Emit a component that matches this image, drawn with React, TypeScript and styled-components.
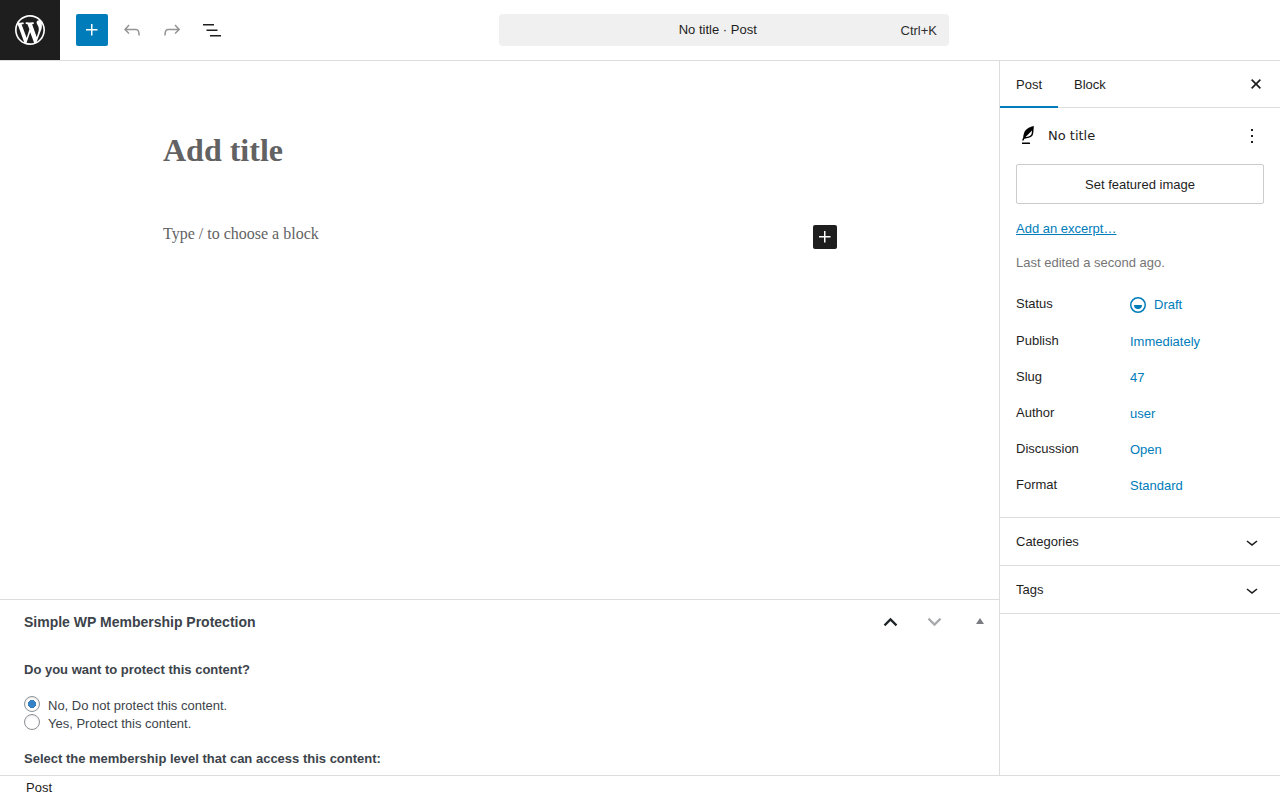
import React, { useState } from "react";
import styled, { createGlobalStyle } from "styled-components";

const accent = "#007cba";
const ink = "#1e1e1e";
const line = "#dddddd";
const metaInk = "#3c434a";

const GlobalStyle = createGlobalStyle`
  *, *::before, *::after { box-sizing: border-box; }
  body {
    margin: 0;
    background: #fff;
    color: ${ink};
    font: 13px/18px "Liberation Sans", Arial, sans-serif;
  }
  h1, h2, p, dl, dd, dt, fieldset { margin: 0; padding: 0; border: 0; }
  button, input { font: inherit; color: inherit; }
`;

const Editor = styled.div`
  display: grid;
  grid-template-rows: auto minmax(0, 1fr) auto;
  height: 100vh;
`;

const Header = styled.header`
  display: grid;
  grid-template-columns: 60px max-content minmax(0, 1fr) 60px;
  align-items: center;
  border-bottom: 1px solid ${line};
`;

const HomeLink = styled.a`
  display: flex;
  align-items: center;
  justify-content: center;
  height: 60px;
  background: ${ink};
  color: #fff;
`;

const Toolbar = styled.div`
  display: flex;
  gap: 8px;
  padding-left: 16px;
`;

const IconButton = styled.button<{ $size?: number; $fill?: string; $color?: string }>`
  display: inline-flex;
  align-items: center;
  justify-content: center;
  flex: none;
  width: ${(p) => p.$size ?? 32}px;
  height: ${(p) => p.$size ?? 32}px;
  padding: 0;
  border: 0;
  border-radius: 2px;
  background: ${(p) => p.$fill ?? "transparent"};
  color: ${(p) => p.$color ?? ink};
`;

const CommandBar = styled.button`
  display: flex;
  align-items: center;
  justify-self: center;
  width: 100%;
  max-width: 450px;
  height: 32px;
  padding: 0 12px 0 36px;
  border: 0;
  border-radius: 4px;
  background: #f0f0f0;
`;

const CommandTitle = styled.span`
  flex: 1;
  text-align: center;
`;

const Shortcut = styled.span`
  padding-top: 2px;
  color: #2f2f2f;
`;

const Body = styled.div`
  display: grid;
  grid-template-columns: minmax(0, 1fr) 281px;
  min-height: 0;
`;

const Content = styled.main`
  display: flex;
  flex-direction: column;
  min-height: 0;
`;

const Canvas = styled.section`
  flex: 1;
  min-height: 0;
  overflow: hidden;
  padding: 65px 16px 0;
`;

const Column = styled.div`
  display: flex;
  flex-direction: column;
  gap: 48px;
  max-width: 675px;
  margin: 0 auto;
  padding-left: 1px;
  font-family: "Liberation Serif", "Times New Roman", serif;
`;

const CanvasInput = styled.input<{ $heading?: boolean }>`
  flex: 1;
  min-width: 0;
  width: 100%;
  padding: 0;
  border: 0;
  outline: 0;
  background: transparent;
  font-size: ${(p) => (p.$heading ? 32 : 16)}px;
  font-weight: ${(p) => (p.$heading ? 700 : 400)};
  line-height: ${(p) => (p.$heading ? 48 : 24)}px;
  height: ${(p) => (p.$heading ? 48 : 24)}px;
  &::placeholder { color: #626262; opacity: 1; }
`;

const BlockRow = styled.div`
  display: flex;
  align-items: flex-end;
  height: 27px;
  > input { align-self: flex-start; }
`;

const MetaBox = styled.section`
  border-top: 1px solid ${line};
  color: ${metaInk};
`;

const MetaHeader = styled.header`
  display: flex;
  align-items: center;
  height: 44px;
  padding-left: 24px;
`;

const MetaTitle = styled.h2`
  flex: 1;
  font-size: 14px;
  line-height: 18px;
`;

const MetaActions = styled.div`
  display: flex;
  align-items: center;
  > :last-child { width: 42px; padding-left: 4px; }
`;

const MetaBody = styled.div`
  display: flex;
  flex-direction: column;
  padding: 17px 24px 7px;
`;

const Strong = styled.p`
  font-weight: 700;
`;

const Choices = styled.fieldset`
  margin: 17px 0 18px;
`;

const Choice = styled.label`
  display: flex;
  align-items: flex-start;
  gap: 8px;
  height: 18px;
  line-height: 20px;
`;

const Radio = styled.input`
  appearance: none;
  width: 16px;
  height: 16px;
  margin: 0;
  border: 1px solid #8c8f94;
  border-radius: 50%;
  background: #fff;
  box-shadow: inset 0 1px 2px rgba(0, 0, 0, 0.1);
  &:checked { background: radial-gradient(circle, #3582c4 0 4px, #fff 4px); }
`;

const Sidebar = styled.aside`
  border-left: 1px solid ${line};
  overflow: hidden;
`;

const Tabs = styled.div`
  display: flex;
  align-items: stretch;
  height: 47px;
  border-bottom: 1px solid ${line};
`;

const Tab = styled.button<{ $active?: boolean }>`
  height: 47px;
  padding: 0 16px;
  border: 0;
  background: none;
  box-shadow: ${(p) => (p.$active ? `inset 0 -2px 0 ${accent}` : "none")};
`;

const TabsEnd = styled.div`
  display: flex;
  align-items: center;
  margin-left: auto;
  padding-right: 12px;
  svg { stroke: currentColor; stroke-width: 0.4; }
`;

const Summary = styled.div`
  display: flex;
  flex-direction: column;
  gap: 16px;
  padding: 16px 16px 15px;
`;

const Card = styled.div`
  display: flex;
  align-items: center;
  gap: 8px;
  height: 24px;
  color: #000;
`;

const CardTitle = styled.h2`
  flex: 1;
  color: ${ink};
  font: 400 13px/20px "DejaVu Sans", sans-serif;
`;

const FeaturedButton = styled.button`
  height: 40px;
  padding: 2px 12px 0;
  border: 1px solid #cccccc;
  border-radius: 2px;
  background: #fff;
`;

const ExcerptLink = styled.a`
  align-self: flex-start;
  color: ${accent};
  text-decoration: underline;
`;

const Muted = styled.p`
  color: #757575;
`;

const Rows = styled.dl`
  display: flex;
  flex-direction: column;
  gap: 4px;
`;

const Row = styled.div`
  display: grid;
  grid-template-columns: 106px 1fr;
  gap: 8px;
  align-items: center;
  min-height: 32px;
  dt { padding-bottom: 2px; }
  &:first-child { min-height: 34px; }
`;

const RowButton = styled.button`
  display: inline-flex;
  align-items: center;
  gap: 4px;
  height: 32px;
  padding: 0;
  border: 0;
  background: none;
  color: ${accent};
  vertical-align: top;
  svg { margin-left: -4px; }
`;

const Panel = styled.button`
  display: flex;
  align-items: center;
  justify-content: space-between;
  width: 100%;
  height: 48px;
  padding: 0 16px;
  border: 0;
  border-top: 1px solid ${line};
  background: none;
  svg { flex: none; }
  &:last-child { height: 49px; border-bottom: 1px solid ${line}; }
`;

const Footer = styled.footer`
  display: flex;
  align-items: center;
  height: 25px;
  padding: 0 26px;
  border-top: 1px solid ${line};
`;

const paths = {
  plus: "M11 12.5V17.5H12.5V12.5H17.5V11H12.5V6H11V11H6V12.5H11Z",
  undo: "M18.3 11.7c-.6-.6-1.4-.9-2.3-.9H6.7l2.9-3.3-1.1-1-4.5 5L8.5 16l1-1-2.7-2.7H16c.5 0 .9.2 1.3.5 1 1 1 3.4 1 4.5v.3h1.5v-.2c0-1.5 0-4.3-1.5-5.7z",
  redo: "M15.6 6.5l-1.1 1 2.9 3.3H8c-.9 0-1.7.3-2.3.9-1.4 1.5-1.4 4.2-1.4 5.6v.2h1.5v-.3c0-1.1 0-3.5 1-4.5.3-.3.7-.5 1.3-.5h9.2L14.5 15l1.1 1.1 4.6-4.6-4.6-5z",
  list: "M3 6h11v1.5H3V6Zm3.5 5.5h11V13h-11v-1.5ZM21 17H10v1.5h11V17Z",
  close: "M12 13.06l3.712 3.713 1.061-1.06L13.061 12l3.712-3.712-1.06-1.06L12 10.938 8.288 7.227l-1.061 1.06L10.939 12l-3.712 3.712 1.06 1.061L12 13.061z",
  more: "M13 19h-2v-2h2v2zm0-6h-2v-2h2v2zm0-6h-2V5h2v2z",
  chevron: "M17.5 11.6L12 16l-5.5-4.4.9-1.2L12 14l4.5-3.6 1 1.2z",
  draft: "M12 18.5a6.5 6.5 0 1 1 0-13 6.5 6.5 0 0 1 0 13ZM4 12a8 8 0 1 1 16 0 8 8 0 0 1-16 0Zm8 4a4 4 0 0 0 4-4H8a4 4 0 0 0 4 4Z",
  feather: "M17.8 2l-.9.3c-.1 0-3.6 1-5.2 2.1C10 5.5 9.3 6.5 8.9 7.1c-.6.9-1.7 4.7-1.7 6.3l-.9 2.3c-.2.4 0 .8.4 1 .1 0 .2.1.3.1.3 0 .6-.2.7-.5l.6-1.5c.3 0 .7-.1 1.2-.2.7-.1 1.4-.3 2.2-.5.8-.2 1.6-.5 2.4-.8.7-.3 1.4-.7 1.9-1.2s.8-1.2 1-1.9c.2-.7.3-1.6.4-2.4.1-.8.1-1.7.2-2.5 0-.8.1-1.5.2-2.1V2zm-1.9 5.6c-.1.8-.2 1.5-.3 2.1-.2.6-.4 1-.6 1.3-.3.3-.8.6-1.4.9-.7.3-1.4.5-2.2.8-.6.2-1.3.3-1.8.4L15 7.5c.3-.3.6-.7 1-1.1 0 .4 0 .8-.1 1.2zM6 20h8v-1.5H6V20z",
  logo: "M20 10c0-5.51-4.49-10-10-10C4.48 0 0 4.49 0 10c0 5.52 4.48 10 10 10 5.51 0 10-4.48 10-10zM7.78 15.37L4.37 6.22c.55-.02 1.17-.08 1.17-.08.5-.06.44-1.13-.06-1.11 0 0-1.45.11-2.37.11-.18 0-.37 0-.58-.01C4.12 2.69 6.87 1.11 10 1.11c2.33 0 4.45.87 6.05 2.34-.68-.11-1.65.39-1.65 1.58 0 .74.45 1.36.9 2.1.35.61.55 1.36.55 2.46 0 1.49-1.4 5-1.4 5l-3.03-8.37c.54-.02.82-.17.82-.17.5-.05.44-1.25-.06-1.22 0 0-1.44.12-2.38.12-.87 0-2.33-.12-2.33-.12-.5-.03-.56 1.2-.06 1.22l.92.08 1.26 3.41zM17.41 10c.24-.64.74-1.87.43-4.25.7 1.29 1.05 2.71 1.05 4.25 0 3.29-1.73 6.24-4.4 7.78.97-2.59 1.94-5.2 2.92-7.78zM6.1 18.09C3.12 16.65 1.11 13.53 1.11 10c0-1.3.23-2.48.72-3.59C3.25 10.3 4.67 14.2 6.1 18.09zm4.03-6.63l2.58 6.98c-.86.29-1.76.45-2.71.45-.79 0-1.57-.11-2.29-.33.81-2.38 1.62-4.74 2.42-7.1z",
};

function Icon({ name, size = 24, box = "0 0 24 24" }: { name: keyof typeof paths; size?: number; box?: string }) {
  return (
    <svg width={size} height={size} viewBox={box} fill="currentColor" aria-hidden="true">
      <path d={paths[name]} fillRule={name === "draft" ? "evenodd" : "nonzero"} />
    </svg>
  );
}

function Arrow({ points }: { points: string }) {
  return (
    <svg width="20" height="20" viewBox="0 0 20 20" fill="none" stroke="currentColor" strokeWidth="2.2" aria-hidden="true">
      <polyline points={points} />
    </svg>
  );
}

const details = [
  ["Publish", "Immediately"],
  ["Slug", "47"],
  ["Author", "user"],
  ["Discussion", "Open"],
  ["Format", "Standard"],
];

const choices = ["No, Do not protect this content.", "Yes, Protect this content."];

export default function App() {
  const [choice, setChoice] = useState(0);

  return (
    <Editor>
      <GlobalStyle />
      <Header>
        <HomeLink href="#" aria-label="View Posts">
          <Icon name="logo" size={36} box="-2 -2 24 24" />
        </HomeLink>
        <Toolbar role="toolbar" aria-label="Document tools">
          <IconButton $fill={accent} $color="#fff" aria-label="Toggle block inserter"><Icon name="plus" /></IconButton>
          <IconButton $color="#949494" aria-label="Undo"><Icon name="undo" /></IconButton>
          <IconButton $color="#949494" aria-label="Redo"><Icon name="redo" /></IconButton>
          <IconButton aria-label="Document Overview"><Icon name="list" /></IconButton>
        </Toolbar>
        <CommandBar>
          <CommandTitle>No title · Post</CommandTitle>
          <Shortcut>Ctrl+K</Shortcut>
        </CommandBar>
      </Header>

      <Body>
        <Content>
          <Canvas>
            <Column>
              <CanvasInput $heading placeholder="Add title" aria-label="Add title" />
              <BlockRow>
                <CanvasInput placeholder="Type / to choose a block" aria-label="Empty block" />
                <IconButton $size={24} $fill={ink} $color="#fff" aria-label="Add block"><Icon name="plus" /></IconButton>
              </BlockRow>
            </Column>
          </Canvas>

          <MetaBox>
            <MetaHeader>
              <MetaTitle>Simple WP Membership Protection</MetaTitle>
              <MetaActions>
                <IconButton $size={44} $color="#1d2327" aria-label="Move up"><Arrow points="3.5,13.4 9.5,7.4 15.5,13.4" /></IconButton>
                <IconButton $size={44} $color="#a7aaad" aria-label="Move down"><Arrow points="3.5,6.6 9.5,12.6 15.5,6.6" /></IconButton>
                <IconButton $size={44} $color="#787c82" aria-label="Toggle panel">
                  <svg width="8" height="8" viewBox="0 0 8 8" fill="currentColor" aria-hidden="true"><path d="M4 0l4 6H0z" /></svg>
                </IconButton>
              </MetaActions>
            </MetaHeader>
            <MetaBody>
              <Strong>Do you want to protect this content?</Strong>
              <Choices aria-label="Content protection">
                {choices.map((text, i) => (
                  <Choice key={text}>
                    <Radio type="radio" name="protect" checked={choice === i} onChange={() => setChoice(i)} />
                    {text}
                  </Choice>
                ))}
              </Choices>
              <Strong>Select the membership level that can access this content:</Strong>
            </MetaBody>
          </MetaBox>
        </Content>

        <Sidebar>
          <Tabs>
            <Tab $active>Post</Tab>
            <Tab>Block</Tab>
            <TabsEnd>
              <IconButton $size={24} aria-label="Close Settings"><Icon name="close" /></IconButton>
            </TabsEnd>
          </Tabs>
          <Summary>
            <Card>
              <Icon name="feather" />
              <CardTitle>No title</CardTitle>
              <IconButton $size={24} aria-label="Actions"><Icon name="more" /></IconButton>
            </Card>
            <FeaturedButton>Set featured image</FeaturedButton>
            <ExcerptLink href="#">Add an excerpt…</ExcerptLink>
            <Muted>Last edited a second ago.</Muted>
            <Rows>
              <Row>
                <dt>Status</dt>
                <dd><RowButton><Icon name="draft" />Draft</RowButton></dd>
              </Row>
              {details.map(([label, value]) => (
                <Row key={label}>
                  <dt>{label}</dt>
                  <dd><RowButton>{value}</RowButton></dd>
                </Row>
              ))}
            </Rows>
          </Summary>
          <Panel>Categories<Icon name="chevron" /></Panel>
          <Panel>Tags<Icon name="chevron" /></Panel>
        </Sidebar>
      </Body>

      <Footer>Post</Footer>
    </Editor>
  );
}
